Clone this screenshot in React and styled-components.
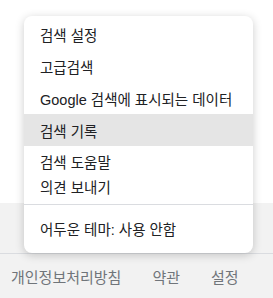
import React from "react";
import styled, { createGlobalStyle } from "styled-components";

const GlobalStyle = createGlobalStyle`
    html, body {
        margin: 0;
        padding: 0;
        background: #ffffff;
    }
    body {
        font-family: "Liberation Sans", "Noto Sans CJK KR", Arial, sans-serif;
        font-size: 15px;
        color: #202124;
    }
`;

const menuGroups = [
    [
        { label: "검색 설정", height: 32 },
        { label: "고급검색", height: 32 },
        { label: "Google 검색에 표시되는 데이터", height: 32 },
        { label: "검색 기록", height: 32, active: true },
        { label: "검색 도움말", height: 30 },
        { label: "의견 보내기", height: 20 },
    ],
    [{ label: "어두운 테마: 사용 안함", height: 32 }],
];

const footerLinks = ["개인정보처리방침", "약관", "설정"];

const App = () => {
    return (
        <Page>
            <GlobalStyle />
            <Content />
            <Footer>
                <FooterTop />
                <FooterLinks>
                    {footerLinks.map((link) => (
                        <FooterLink key={link}>{link}</FooterLink>
                    ))}
                </FooterLinks>
            </Footer>

            <Menu>
                {menuGroups.map((group, i) => (
                    <Group key={i} $first={i === 0}>
                        {group.map((item) => (
                            <Item
                                key={item.label}
                                $height={item.height}
                                $active={item.active}
                            >
                                {item.label}
                            </Item>
                        ))}
                    </Group>
                ))}
            </Menu>
        </Page>
    );
};

export default App;

const Page = styled.div`
    position: relative;
    width: 273px;
    height: 298px;
    display: flex;
    flex-direction: column;
    overflow: hidden;
`;

const Content = styled.div`
    height: 203px;
    background: #ffffff;
`;

const Footer = styled.div`
    flex: 1;
    display: flex;
    flex-direction: column;
    background: #f2f2f2;
`;

const FooterTop = styled.div`
    height: 50px;
    border-bottom: 1px solid #dadce0;
`;

const FooterLinks = styled.div`
    flex: 1;
    display: flex;
    align-items: center;
    padding-left: 11px;
    gap: 31px;
`;

const FooterLink = styled.a`
    color: #70757a;
    font-size: 15px;
    white-space: nowrap;
    cursor: pointer;
`;

const Menu = styled.div`
    position: absolute;
    top: 16px;
    left: 24px;
    width: 229px;
    background: #ffffff;
    border-radius: 8px;
    box-shadow: 0 2px 10px 0 rgba(0, 0, 0, 0.2);
    overflow: hidden;
`;

const Group = styled.div`
    padding: ${(p) => (p.$first ? "2px 0 8px" : "7px 0 9px")};
    border-top: ${(p) => (p.$first ? "none" : "1px solid #dadce0")};
`;

const Item = styled.div`
    height: ${(p) => p.$height}px;
    display: flex;
    align-items: center;
    padding-left: 16px;
    font-size: 14.5px;
    color: #202124;
    white-space: nowrap;
    background: ${(p) => (p.$active ? "#e5e5e5" : "transparent")};
`;
